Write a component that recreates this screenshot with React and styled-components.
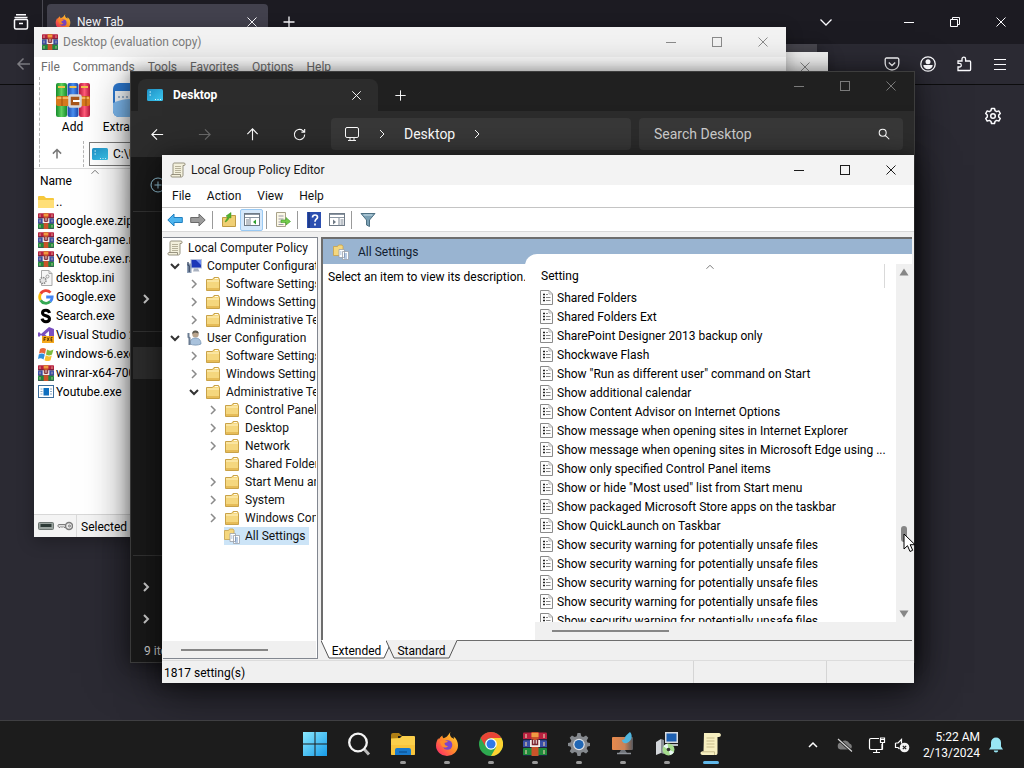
import React from "react";
import styled, { createGlobalStyle, css } from "styled-components";

const GlobalStyle = createGlobalStyle`
  *, *::before, *::after { box-sizing: border-box; }
  html, body, #root { height: 100%; }
  body {
    margin: 0;
    overflow: hidden;
    background: #2b2a33;
    font-family: Roboto, "Open Sans", sans-serif;
    font-size: 12px;
    line-height: 16px;
  }
  button, input { font: inherit; color: inherit; }
  button { border: 0; padding: 0; background: none; white-space: nowrap; cursor: default; }
  svg { display: block; flex: none; }
`;

/* ---------- line glyphs ---------- */

const glyphs = {
  close: <path d="M3.5 3.5l9 9M12.500 3.500l-9 9" />,
  min: <path d="M3 8.500h10" />,
  max: <rect x="3.500" y="3.500" width="9" height="9" />,
  restore: <path d="M3.500 5.500h7v7h-7zM5.500 5.500v-2h7v7h-2" />,
  plus: <path d="M8 2.500v11M2.500 8h11" />,
  right: <path d="M6 4l4 4-4 4" />,
  down: <path d="M4 6l4 4 4-4" />,
  up: <path d="M4 10l4-4 4 4" />,
  wideDown: <path d="M2.500 5.500L8 11l5.500-5.500" />,
  arrowLeft: <path d="M14 8H2.500M7.500 2.500L2 8l5.500 5.500" />,
  arrowRight: <path d="M2 8h11.500M8.500 2.500L14 8l-5.500 5.500" />,
  arrowUp: <path d="M8 14V2.500M2.500 7.500L8 2l5.500 5.500" />,
  refresh: <path d="M13.500 8A5.500 5.500 0 1 1 11.500 3.800M13.500 2v3.500h-3.500M13.300 5.200L11.500 3.800" />,
  menu: <path d="M2 3.500h12M2 8.500h12M2 13.500h12" />,
  search: <path d="M6.500 2.500a4 4 0 1 1 0 8 4 4 0 0 1 0-8zM9.500 9.500l4.500 4.500" />,
  circlePlus: <path d="M8 1a7 7 0 1 1 0 14A7 7 0 0 1 8 1zM8 4.500v7M4.500 8h7" />,
  monitor: <path d="M3 1.500h10a1.500 1.500 0 0 1 1.500 1.500v7a1.500 1.500 0 0 1-1.500 1.500H3A1.500 1.500 0 0 1 1.500 10V3A1.500 1.500 0 0 1 3 1.500zM6 11.500v2.500M10 11.500v2.500M4 14.500h8" />,
  archive: <path d="M3 .8h10M1.500 3.500h13M2.500 5.500h11a1 1 0 0 1 1 1v7a1.500 1.500 0 0 1-1.500 1.500H3A1.500 1.500 0 0 1 1.500 13.500v-7a1 1 0 0 1 1-1zM6 9.500h4" />,
  pocket: <path d="M2.500 2h11a1.300 1.300 0 0 1 1.300 1.300V7.500a6.800 6.500 0 0 1-13.600 0V3.300A1.300 1.300 0 0 1 2.500 2zM4.800 6.500L8 9.500l3.200-3" />,
  puzzle: <path d="M2 14.500V11h1.500a1.800 1.800 0 0 0 0-3.600H2V5h4V3a1.800 1.800 0 0 1 3.600 0v2h4a1 1 0 0 1 1 1v7.500a1 1 0 0 1-1 1z" />,
};

function Glyph({ name, size = 16, weight = 1, color = "currentColor" }) {
  return (
    <svg width={size} height={size} viewBox="0 0 16 16" fill="none" stroke={color} strokeWidth={weight} aria-hidden="true">
      {glyphs[name]}
    </svg>
  );
}

const AccountIcon = () => (
  <svg width="16" height="16" viewBox="0 0 16 16">
    <circle cx="8" cy="8" r="7.200" fill="none" stroke="#fbfbfe" strokeWidth="1.300" />
    <circle cx="8" cy="5.700" r="2.500" fill="#fbfbfe" />
    <path d="M3.300 9h9.400c0 2.600-2 4.200-4.700 4.200S3.300 11.600 3.300 9z" fill="#fbfbfe" />
  </svg>
);

const gearTeeth = "M10.500 1h3l.8 3.200 2 .9 2.700-1.700 2.300 2.300-1.600 2.800.8 2 2.500.600v2.800l-2.500.6-.8 2 1.600 2.800-2.300 2.300-2.700-1.700-2 .9-.8 3.200h-3l-.8-3.200-2-.9L5 21.600l-2.300-2.300 1.600-2.800-.8-2L1 13.900v-2.800l2.500-.6.8-2-1.600-2.800L5 3.400l2.700 1.700 2-.9z";

const GearOutline = () => (
  <svg width="18" height="18" viewBox="0 0 18 18" fill="none" stroke="#fbfbfe" strokeWidth="1.500" strokeLinejoin="round">
    <path d="M7.500 1.500h3l.6 2.200 1.500.9 2.200-.7 1.500 2.600L14.700 8v2l1.600 1.500-1.500 2.600-2.200-.7-1.500.9-.6 2.200h-3l-.6-2.200-1.500-.9-2.200.7-1.500-2.600L3.300 10V8L1.700 6.500l1.500-2.600 2.200.7 1.500-.9z" />
    <circle cx="9" cy="9" r="2.300" />
  </svg>
);

/* ---------- coloured icons ---------- */

const FirefoxIcon = ({ size = 24 }) => (
  <svg width={size} height={size} viewBox="0 0 24 24">
    <defs>
      <linearGradient id="foxBody" x1="1" y1="0" x2="0" y2="1">
        <stop offset="0" stopColor="#ffd93b" />
        <stop offset=".45" stopColor="#ff9427" />
        <stop offset=".8" stopColor="#ff4557" />
        <stop offset="1" stopColor="#e82870" />
      </linearGradient>
    </defs>
    <path d="M15.500 0c-1 2-.5 4 1 5.500 1.500.5 2 1 2.500 1.500 0-1-.3-2-.5-2.500 3 2 4.500 5.500 4.500 9a11 10.500 0 0 1-22 0C1 10 2.500 7.500 3.500 6c0 .5 0 1 .2 1.500C4.500 6 6 4.500 7.500 3.500c-.2 1 .2 2 1 2.700C12 5.500 13 3 15.500 0z" fill="url(#foxBody)" />
    <circle cx="12.500" cy="13" r="4.800" fill="#7c45c9" />
    <path d="M5 9c3-1.500 6-.5 8 .5-1 1.200-3 1-3.500 1.800 0 1.700 1.500 3 3.500 2.700-2 3-7.500 2-8-5z" fill="#ff8a2a" />
  </svg>
);

const ChromeIcon = () => (
  <svg width="24" height="24" viewBox="0 0 24 24">
    <circle cx="12" cy="12" r="12" fill="#2da94f" />
    <path d="M12 6h10.400A12 12 0 0 1 12 24l5.200-9z" fill="#fdd231" />
    <path d="M1.600 6A12 12 0 0 1 22.400 6H12a6 6 0 0 0-5.200 9z" fill="#e94436" />
    <circle cx="12" cy="12" r="5.800" fill="#fff" />
    <circle cx="12" cy="12" r="4.500" fill="#3079e8" />
  </svg>
);

const StartIcon = () => (
  <svg width="24" height="24" viewBox="0 0 24 24">
    <defs>
      <linearGradient id="start" gradientUnits="userSpaceOnUse" x1="0" y1="0" x2="24" y2="24">
        <stop offset="0" stopColor="#8ae9ff" />
        <stop offset="1" stopColor="#179be8" />
      </linearGradient>
    </defs>
    <path d="M0 0h11.500v11.500H0zM12.500 0H24v11.500H12.500zM0 12.500h11.500V24H0zM12.500 12.500H24V24H12.500z" fill="url(#start)" />
  </svg>
);

const TaskSearchIcon = () => (
  <svg width="24" height="24" viewBox="0 0 24 24" fill="none">
    <path d="M17 17l5 5.500" stroke="#bbb" strokeWidth="3" />
    <circle cx="11" cy="10.500" r="8.800" stroke="#f4f4f4" strokeWidth="2.300" />
  </svg>
);

const ExplorerIcon = () => (
  <svg width="26" height="24" viewBox="0 0 26 24">
    <path d="M1 3a2 2 0 0 1 2-2h6l3 3h-4v4H1z" fill="#b07f14" />
    <path d="M1 6.500l9-.5 2-2h12a1 1 0 0 1 1 1v17a1 1 0 0 1-1 1H2a1 1 0 0 1-1-1z" fill="#fbcf4b" />
    <path d="M1 13h24v9a1 1 0 0 1-1 1H2a1 1 0 0 1-1-1z" fill="#f7bd30" opacity=".6" />
    <path d="M5 23v-5a2 2 0 0 1 2-2h12a2 2 0 0 1 2 2v5z" fill="#1879cc" />
    <path d="M9 20h8" stroke="#0c579c" strokeWidth="1.500" />
  </svg>
);

const BooksIcon = ({ size = 16 }) => (
  <svg width={size} height={size} viewBox="0 0 24 24">
    <rect width="24" height="7.500" y=".5" rx="1" fill="#b8203f" />
    <rect width="24" height="7.500" y="8.300" rx="1" fill="#3a4fa8" />
    <rect width="24" height="7.500" y="16" rx="1" fill="#1f8a3c" />
    <path d="M0 7.500h24M0 15.500h24M0 23.500h24" stroke="#1d2340" />
    <path d="M3 2v4M3 10v4M3 18v4M21 2v4M21 10v4M21 18v4" stroke="#dfc7a8" strokeWidth="1.200" />
    <path d="M8.500 0h7v24h-7z" fill="#c9542a" />
    <path d="M8.500 1h7v4h-7z" fill="#ef9b43" />
    <path d="M7 8h10v7H7z" fill="#f4ece8" />
    <path d="M9.500 7v5.500h5V7M12 8v5" fill="none" stroke="#7b2430" strokeWidth="1.500" />
  </svg>
);

const AddIcon = () => (
  <svg width="34" height="34" viewBox="0 0 34 34">
    <defs>
      <linearGradient id="bookG"><stop offset="0" stopColor="#168b2c" /><stop offset=".5" stopColor="#5fd05f" /><stop offset="1" stopColor="#168b2c" /></linearGradient>
      <linearGradient id="bookB"><stop offset="0" stopColor="#1a46a8" /><stop offset=".5" stopColor="#4a90f0" /><stop offset="1" stopColor="#1a46a8" /></linearGradient>
      <linearGradient id="bookR"><stop offset="0" stopColor="#b3173a" /><stop offset=".5" stopColor="#ff5a78" /><stop offset="1" stopColor="#b3173a" /></linearGradient>
    </defs>
    <rect x="0" y="0" width="11" height="34" rx="2" fill="url(#bookG)" />
    <rect x="11.500" y="0" width="11" height="34" rx="2" fill="url(#bookB)" />
    <rect x="23" y="0" width="11" height="34" rx="2" fill="url(#bookR)" />
    <path d="M2 4h7M13.500 4h7M25 4h7" stroke="#f2c14b" strokeWidth="2" />
    <rect x="0" y="13" width="34" height="10" rx="2" fill="#d7791d" />
    <path d="M1 15h32" stroke="#f6b35b" strokeWidth="2" />
    <path d="M6 13v10M30 13v10" stroke="#9d510e" />
    <rect x="13.500" y="12.500" width="11" height="11" rx="1" fill="#a8561a" stroke="#d9d9d9" strokeWidth="2.500" />
    <path d="M17 18h7" stroke="#fff" strokeWidth="2" />
  </svg>
);

const ExtractIcon = () => (
  <svg width="34" height="34" viewBox="0 0 34 34">
    <rect x="0" y="0" width="34" height="34" rx="6" fill="#2d78cf" />
    <path d="M2 8h30v12H2z" fill="#f4f8fc" />
    <path d="M5 14h24" stroke="#9fb7d2" strokeWidth="2" strokeDasharray="2 2" />
    <path d="M0 20q17-8 34 0v8a6 6 0 0 1-6 6H6a6 6 0 0 1-6-6z" fill="#7fbcf3" />
  </svg>
);

const DesktopIcon = () => (
  <svg width="16" height="16" viewBox="0 0 16 16">
    <defs>
      <linearGradient id="desk" x1="0" y1="0" x2="1" y2="1">
        <stop offset="0" stopColor="#1f8fc4" /><stop offset="1" stopColor="#3cc8f0" />
      </linearGradient>
    </defs>
    <rect x="0" y="2" width="16" height="12" rx="1.500" fill="url(#desk)" />
    <path d="M2.500 5h1.500M2.500 8h1.500M8 12.500h1M10.500 12.500h1M13 12.500h1" stroke="#d8f6ff" strokeWidth="1.200" />
  </svg>
);

const FolderIcon = () => (
  <svg width="16" height="16" viewBox="0 0 16 16">
    <path d="M1.500 3.500h6l1.500-2h4.500l1 2v11h-13z" fill="#f5d77e" stroke="#c9a248" />
    <path d="M2 5h12" stroke="#fff3c4" />
    <path d="M10 2.500h3" stroke="#fffbe8" />
    <path d="M2 12h12v2H2z" fill="#e6bc58" />
  </svg>
);

const UpFolderIcon = () => (
  <svg width="16" height="16" viewBox="0 0 16 16">
    <path d="M0 3a1 1 0 0 1 1-1h5l2 2h7a1 1 0 0 1 1 1v8a1 1 0 0 1-1 1H1a1 1 0 0 1-1-1z" fill="#f6c83c" />
    <path d="M0 6h16v7a1 1 0 0 1-1 1H1a1 1 0 0 1-1-1z" fill="#ffdf78" />
  </svg>
);

const ScrollIcon = ({ size = 16 }) => (
  <svg width={size} height={size} viewBox="0 0 16 16">
    <path d="M4 1h10c1.500 0 1.500 2.500 0 2.500h-1V13c0 1-.5 2-1.500 2H2c-1.500 0-1.500-2.500 0-2.500h1V3c0-1 .3-2 1-2z" fill="#f3f0dc" stroke="#8d8875" strokeWidth=".9" />
    <path d="M5 4.500h6M5 6.500h6M5 8.500h6M5 10.500h6" stroke="#a49f86" strokeWidth=".8" />
    <path d="M2 12.500h8.500v2.300" fill="none" stroke="#8d8875" strokeWidth=".9" />
  </svg>
);

const TaskScrollIcon = () => (
  <svg width="24" height="24" viewBox="0 0 24 24">
    <path d="M5 1h15c2.500 0 2.500 4 0 4h-1.500v16c0 1.500-.8 2-1.800 2H3.500C1 23 1 19.500 3 19.500h1.500z" fill="#f7efc0" />
    <path d="M7.500 6h8M7.500 9h8M7.500 12h8M7.500 15h8" stroke="#c9bd8c" />
    <path d="M3 19.800h12.500V23" fill="none" stroke="#c9bd8c" />
  </svg>
);

const ComputerIcon = () => (
  <svg width="16" height="16" viewBox="0 0 16 16">
    <rect x="4.500" y="1" width="11.500" height="9.500" fill="#b9c4dc" />
    <rect x="5.500" y="2" width="9.500" height="7.500" fill="#1c37b8" />
    <path d="M10 2h5v5z" fill="#6f8df0" />
    <path d="M8 10.500h4l1.500 3H7z" fill="#a9b1c0" />
    <path d="M1 5.500h4.500V15H1z" fill="#8fa0b8" />
    <path d="M2 4v3l1.200 1v6" stroke="#3c4b66" fill="none" strokeWidth="1.300" />
  </svg>
);

const UserIcon = () => (
  <svg width="16" height="16" viewBox="0 0 16 16">
    <circle cx="9.500" cy="4.200" r="3.200" fill="#b9a48c" />
    <path d="M6.300 4a3.200 3.200 0 0 1 6.400-.5L9 2.500z" fill="#5d5a50" />
    <path d="M4 14c0-4 2-6 5.500-6s5.500 2 5.500 6c-3 1.500-8 1.500-11 0z" fill="#a9c2dc" stroke="#6f8caa" strokeWidth=".7" />
    <path d="M2.500 3v4l1 1v7" stroke="#6b7c92" fill="none" strokeWidth="2" />
  </svg>
);

const AllSettingsIcon = () => (
  <svg width="16" height="16" viewBox="0 0 16 16">
    <path d="M.5 2.500h4l1-1.500H9l1 1.500v9H.5z" fill="#f5d77e" stroke="#c9a248" strokeWidth=".8" />
    <path d="M6 5.500h5.500v8H6zM9.500 7.500h6v8h-6z" fill="#fff" stroke="#9aa0a8" strokeWidth=".8" />
    <path d="M11 10h3M11 12h3M11 14h3M7.300 8h1M7.300 10h1" stroke="#4a78b8" strokeWidth=".8" />
  </svg>
);

const PolicyIcon = () => (
  <svg width="13" height="15" viewBox="0 0 13 15">
    <path d="M.5.500h8.500l3.500 3.500V14.500H.5z" fill="#fdfdfd" stroke="#8a8a8a" />
    <path d="M9 .500V4h3.500" fill="none" stroke="#b5b5b5" />
    <path d="M3 4.500h2M3 7.500h2M3 10.500h2" stroke="#222" strokeWidth="1.400" />
    <path d="M6 4.500h2M6 7.500h4.500M6 10.500h4.500" stroke="#888" />
  </svg>
);

const IniIcon = () => (
  <svg width="16" height="16" viewBox="0 0 16 16">
    <path d="M3.500.500h7.500l3 3v12H3.500z" fill="#f6f6f6" stroke="#a9a9a9" />
    <path d="M11 .5v3h3" fill="none" stroke="#a9a9a9" />
    <circle cx="5" cy="10.500" r="3" fill="#e4e4e4" stroke="#8b8b8b" strokeDasharray="1.500 .8" strokeWidth="1.500" />
    <circle cx="9.500" cy="6.500" r="1.500" fill="none" stroke="#9b9b9b" />
  </svg>
);

const GoogleIcon = () => (
  <svg width="16" height="16" viewBox="0 0 16 16" fill="none" strokeWidth="2.800">
    <path d="M2.600 4.800A6.200 6.200 0 0 1 12.500 3.600" stroke="#ea4335" />
    <path d="M2.600 11.200a6.200 6.200 0 0 1 0-6.400" stroke="#fbbc05" />
    <path d="M12.200 12.600a6.200 6.200 0 0 1-9.600-1.400" stroke="#34a853" />
    <path d="M8.200 8h6a6.200 6.200 0 0 1-2 4.600" stroke="#4285f4" />
  </svg>
);

const SearchExeIcon = () => (
  <svg width="16" height="16" viewBox="0 0 16 16" fill="none">
    <path d="M11.500 5C11 3 9.800 2.300 8 2.300 6 2.300 4.500 3.300 4.500 5c0 3.600 7 2 7 5.800 0 1.900-1.500 2.900-3.500 2.900s-3.500-1-4-3" stroke="#000" strokeWidth="3" />
  </svg>
);

const VisualStudioIcon = () => (
  <svg width="16" height="16" viewBox="0 0 16 16">
    <path d="M11 0l5 2v11l-5 2-8-7-2 2-1-1V6l1-1 2 2z" fill="#7a4fc0" />
    <path d="M11 4v7L7 7.500z" fill="#fff" />
    <rect x="4" y="9" width="12" height="7" fill="#f6a81c" />
    <path d="M6 14v-3.500h2M6 12.300h1.500M9.200 10.500l2 3.500M11.200 10.500l-2 3.500M14.500 10.500H13V14h1.500M13 12.300h1.300" stroke="#4a2a00" fill="none" strokeWidth=".8" />
  </svg>
);

const Win7Icon = () => (
  <svg width="16" height="16" viewBox="0 0 16 16">
    <path d="M2 3c2-1.500 4-1.500 6 0L7 8C5 6.500 3 6.500 1 7.500z" fill="#e8663c" />
    <path d="M9 3.500c2 1.500 4 1.500 6.500 0L14 8.500c-2 1.200-4 1.200-6 0z" fill="#7cbb3c" />
    <path d="M.8 8.500c2-1.200 4-1.200 6 0l-1.300 5C3.500 12 1.500 12 0 13z" fill="#2f8fdc" />
    <path d="M7.800 9.300c2 1.400 4 1.400 6 .2l-1.300 4.700c-2 1.200-4 1.200-6 0z" fill="#fbc22f" />
  </svg>
);

const ExeIcon = () => (
  <svg width="16" height="14" viewBox="0 0 16 14">
    <rect x=".5" y=".5" width="15" height="12" fill="#fff" stroke="#3f6f9c" />
    <rect x="5.500" y="3" width="5.500" height="7.500" fill="#0f6fc0" />
    <path d="M2.500 4h2M2.500 6.500h2M2.500 9h2M12 4h2M12 6.500h2M12 9h2" stroke="#8aa8c4" />
  </svg>
);

const TaskSettingsIcon = () => (
  <svg width="24" height="24" viewBox="0 0 24 24">
    <path d={gearTeeth} fill="#85898e" />
    <circle cx="12" cy="12.500" r="5.800" fill="#dfe3e8" />
    <circle cx="12" cy="12.500" r="4.600" fill="#1f66b4" />
  </svg>
);

const PersonalizeIcon = () => (
  <svg width="24" height="24" viewBox="0 0 24 24">
    <defs>
      <linearGradient id="pers"><stop offset="0" stopColor="#e98a4c" /><stop offset=".6" stopColor="#c98258" /><stop offset="1" stopColor="#55585e" /></linearGradient>
    </defs>
    <rect x="1" y="5" width="21" height="13" rx="1" fill="url(#pers)" />
    <path d="M10 18h4l2 3H8z" fill="#6f7379" />
    <path d="M6 21.500h14" stroke="#8f9399" strokeWidth="1.500" />
    <path d="M19 0c3 3 2 9-3 11-3 1-5-1-5-3 2 0 3-1 3-3 1-2 3-3 5-5z" fill="#4fb6df" />
  </svg>
);

const InstallerIcon = () => (
  <svg width="24" height="24" viewBox="0 0 24 24">
    <path d="M1 10l5-3v14l-5 2z" fill="#d3d6da" />
    <path d="M6 7l3 1v14l-3-1z" fill="#8b9097" />
    <rect x="10" y="0" width="13" height="11" fill="#d8dbe0" />
    <rect x="11.500" y="1.500" width="10" height="8" fill="#1d5fb0" />
    <path d="M14 12h9v2h-9z" fill="#b9bdc3" />
    <circle cx="13.500" cy="17.500" r="6" fill="#a6dc8e" />
    <path d="M13.500 17.500l-5-3a6 6 0 0 1 4-3zM13.500 17.500l5.500 2.500a6 6 0 0 1-4 3z" fill="#e9f7f4" />
    <circle cx="13.500" cy="17.500" r="1.800" fill="#333" />
  </svg>
);

const CloudOffIcon = () => (
  <svg width="18" height="16" viewBox="0 0 18 16">
    <path d="M4.500 12.500a3.500 3.500 0 0 1 .3-6.900 5 5 0 0 1 8.700.9 3.200 3.200 0 0 1 .5 6z" fill="#7b7b7b" />
    <path d="M2 2l14 12.500" stroke="#1c1c1c" strokeWidth="3" />
    <path d="M2 2l14 12.500" stroke="#d8d8d8" strokeWidth="1.200" />
  </svg>
);

const NetworkIcon = () => (
  <svg width="18" height="18" viewBox="0 0 18 18" fill="none" stroke="#fff" strokeWidth="1.200">
    <path d="M11 2.500H3A1.500 1.500 0 0 0 1.500 4v8A1.500 1.500 0 0 0 3 13.500h11V8M8.500 13.500v3M5 16.500h7" />
    <path d="M12.500 2v4.500h4V2zM14.500 6.500v7M13 3.500h3" />
  </svg>
);

const MutedIcon = () => (
  <svg width="16" height="16" viewBox="0 0 16 16">
    <path d="M1.500 6v4.500H4l1.500 1.500M1.500 6H4l3.500-3.500v4" fill="none" stroke="#fff" strokeWidth="1.200" />
    <circle cx="10.500" cy="10.500" r="4.800" fill="#f4f4f4" />
    <path d="M8.800 8.800l3.400 3.400M12.200 8.800l-3.400 3.400" stroke="#222" strokeWidth="1.200" />
  </svg>
);

const BellIcon = () => (
  <svg width="16" height="16" viewBox="0 0 16 16" fill="#99e6f4">
    <path d="M8 .5a5 5 0 0 1 5 5v4l2 3H1l2-3v-4a5 5 0 0 1 5-5zM5.800 13.500h4.400a2.200 2 0 0 1-4.400 0z" />
  </svg>
);

/* toolbar pictures of the policy editor */
const BackIcon = () => (
  <svg width="16" height="16" viewBox="0 0 16 16"><path d="M.8 8L7 2v3.500h8.300v5H7V14z" fill="#4db4ee" stroke="#1f7fc0" /></svg>
);
const ForwardIcon = () => (
  <svg width="16" height="16" viewBox="0 0 16 16"><path d="M15.200 8L9 2v3.500H.7v5H9V14z" fill="#9c9c9c" stroke="#6a6a6a" /></svg>
);
const FolderUpIcon = () => (
  <svg width="16" height="16" viewBox="0 0 16 16">
    <path d="M1.500 5.500h7l2-2h4v11h-13z" fill="#f0cf74" stroke="#bf9a45" />
    <path d="M4 10c1-2 2-4 3-5L5 4l5-3.500V6L8.500 5.500C7 8 6 9.500 4 10z" fill="#52b52c" stroke="#3c8f1c" strokeWidth=".5" />
  </svg>
);
const TreePaneIcon = ({ flip }) => (
  <svg width="16" height="16" viewBox="0 0 16 16">
    <rect x=".5" y="1.500" width="15" height="12" fill="#fff" stroke="#6f7a86" />
    <path d="M1 2.500h14M1 5.500h14" stroke="#8b96a3" />
    <path d={flip ? "M10 6v7.500M11.500 8h3M11.500 10h3M11.500 12h3" : "M6 6v7.500M2 8h3M2 10h3M2 12h3"} stroke="#7a8592" />
    <path d={flip ? "M4 7.500v5L7 10z" : "M12 7.500v5L9 10z"} fill={flip ? "#6f7a86" : "#2ea02e"} />
  </svg>
);
const ExportIcon = () => (
  <svg width="16" height="16" viewBox="0 0 16 16">
    <path d="M1.500.500h9v14h-9z" fill="#fbf8e6" stroke="#a8a28a" />
    <path d="M3.500 4h5M3.500 7h5M3.500 10h3M3.500 12.500h5" stroke="#9c98a8" />
    <path d="M6 8h5V5.500L15.500 9.500 11 13v-2.500H6z" fill="#74cc4c" stroke="#3d9a24" strokeWidth=".6" />
  </svg>
);
const HelpIcon = () => (
  <svg width="14" height="16" viewBox="0 0 14 16">
    <rect width="14" height="16" fill="#2c4fb0" />
    <path d="M2 0v16" stroke="#1b357f" strokeWidth="1.500" />
    <path d="M5.500 5.500C5.500 3.500 7 3 8 3s2.500.7 2.500 2.300C10.500 7 8 7 8 9.800M8 11.500v2" stroke="#fff" fill="none" strokeWidth="1.700" />
  </svg>
);
const FilterIcon = () => (
  <svg width="16" height="16" viewBox="0 0 16 16">
    <path d="M1 1.500h14L9.500 8v6.500L6.500 13V8z" fill="#7ba0b4" stroke="#4f7183" />
    <path d="M3.500 3h9" stroke="#cfe2ec" />
  </svg>
);
const DiskIcon = () => (
  <svg width="16" height="10" viewBox="0 0 16 10">
    <rect x=".5" y="1.500" width="15" height="7" rx="1" fill="#9aa39f" stroke="#6d7572" />
    <path d="M2.500 4.500h11" stroke="#2d3a36" strokeWidth="3" />
  </svg>
);
const KeyIcon = () => (
  <svg width="16" height="10" viewBox="0 0 16 10" fill="none" stroke="#7c7c7c">
    <path d="M9 3.500H1.500L.8 5l1.200 1.500h1l1-1 1 1 1-1 1 1h2" fill="#ddd" />
    <circle cx="12" cy="5" r="3.500" fill="#e8e8e8" strokeWidth="1.500" />
    <circle cx="12.500" cy="5" r="1" />
  </svg>
);
const CursorIcon = () => (
  <svg width="14" height="20" viewBox="0 0 14 20">
    <path d="M1 1v15l3.500-3.300L7 18.500l2.700-1.200-2.500-5.600H12z" fill="#fff" stroke="#000" />
  </svg>
);

/* ---------- desktop and browser ---------- */

const Desktop = styled.div`
  position: relative;
  display: flex;
  flex-direction: column;
  min-height: 100vh;
  overflow: hidden;
`;

const Browser = styled.main`
  flex: 1;
  display: flex;
  flex-direction: column;
  background: #2b2a33;
  color: #fbfbfe;
`;

const TabStrip = styled.header`
  display: flex;
  align-items: center;
  height: 44px;
  background: #1c1b22;
`;

const StripButton = styled.button`
  display: grid;
  place-items: center;
  width: ${(p) => p.$w || 42}px;
  height: 44px;
`;

const BrowserTab = styled.div`
  display: flex;
  align-items: center;
  gap: 6px;
  width: 221px;
  height: 36px;
  margin-left: 4px;
  padding: 0 8px;
  border-radius: 4px;
  background: #42414d;
  span { flex: 1; }
`;

const Rule = styled.div`
  width: 1px;
  height: 44px;
  background: #4a4952;
`;

const Spacer = styled.div` flex: 1; `;

const NavBar = styled.div`
  display: flex;
  align-items: center;
  justify-content: space-between;
  height: 41px;
  padding: 0 6px;
  border-bottom: 1px solid #0c0c0d;
`;

const NavGroup = styled.div` display: flex; `;

const NavButton = styled.button`
  display: grid;
  place-items: center;
  width: 36px;
  height: 36px;
  opacity: ${(p) => (p.$dim ? 0.4 : 1)};
`;

const PageArea = styled.section`
  display: flex;
  justify-content: flex-end;
  align-items: flex-start;
  padding: 13px;
`;

/* ---------- shared window parts ---------- */

const Win = styled.section`
  position: absolute;
  left: ${(p) => p.$x}px;
  top: ${(p) => p.$y}px;
  width: ${(p) => p.$w}px;
  height: ${(p) => p.$h}px;
  display: flex;
  flex-direction: column;
  overflow: hidden;
  background: ${(p) => p.$bg};
  box-shadow: ${(p) => (p.$deep ? "0 0 14px rgba(0,0,0,.3), 0 10px 40px rgba(0,0,0,.55)" : "0 4px 16px rgba(0,0,0,.3)")};
`;

const TitleBar = styled.header`
  display: flex;
  align-items: center;
  height: 30px;
  flex: none;
  padding-left: 8px;
  gap: 5px;
  background: #f3f3f3;
  color: ${(p) => p.$color || "#1b1b1b"};
  h2 { flex: 1; margin: 0; font-size: 12px; font-weight: 400; }
`;

const Caption = styled.div`
  display: flex;
  color: ${(p) => p.$color || "inherit"};
`;

const CaptionButton = styled.button`
  display: grid;
  place-items: center;
  width: 46px;
  height: 28px;
`;

function CaptionButtons({ color }) {
  return (
    <Caption $color={color}>
      <CaptionButton aria-label="Minimize"><Glyph name="min" /></CaptionButton>
      <CaptionButton aria-label="Maximize"><Glyph name="max" /></CaptionButton>
      <CaptionButton aria-label="Close"><Glyph name="close" /></CaptionButton>
    </Caption>
  );
}

const MenuBar = styled.nav`
  display: flex;
  align-items: center;
  flex: none;
  gap: ${(p) => p.$gap}px;
  height: ${(p) => p.$h}px;
  padding-left: ${(p) => p.$pad}px;
  background: #fff;
  color: ${(p) => p.$color};
`;

/* ---------- archiver ---------- */

const RarTools = styled.div`
  display: flex;
  gap: 4px;
  height: 64px;
  margin-left: 5px;
  padding: 6px 6px 0;
  border-left: 1px dashed #b5b5b5;
`;

const RarTool = styled.button`
  display: flex;
  flex-direction: column;
  align-items: center;
  gap: 2px;
  width: 53px;
`;

const RarAddress = styled.div`
  display: flex;
  flex: none;
  align-items: center;
  height: 26px;
  margin-left: 5px;
  border-left: 1px dashed #b5b5b5;
`;

const RarUp = styled.button`
  display: grid;
  place-items: center;
  width: 33px;
  height: 26px;
  color: #777;
`;

const RarPath = styled.div`
  display: flex;
  flex: 1;
  align-items: center;
  height: 24px;
  padding-left: 2px;
  gap: 5px;
  border: 1px solid #7a7a7a;
  background: #fff;
  input { width: 100px; border: 0; padding: 0; outline: 0; background: none; }
`;

const RarPathSlot = styled.div`
  display: flex;
  flex: 1;
  height: 26px;
  margin-left: 10px;
  padding: 1px 0 1px 5px;
  border-left: 1px dashed #b5b5b5;
`;

const RarTable = styled.table`
  border-collapse: collapse;
  width: 100%;
  margin-top: 1px;
  border-top: 1px solid #dcdcdc;
  th { position: relative; height: 24px; padding: 0 6px; text-align: left; font-weight: 400; }
  td { height: 19px; padding: 0 4px; }
`;

const SortMark = styled.span`
  position: absolute;
  top: ${(p) => p.$top}px;
  left: ${(p) => p.$left}px;
  color: #666;
`;

const Item = styled.div`
  display: flex;
  align-items: center;
  gap: ${(p) => p.$gap || 2}px;
  height: 19px;
  white-space: nowrap;
`;

const RarStatus = styled.footer`
  display: flex;
  align-items: center;
  gap: 3px;
  height: 23px;
  margin-top: auto;
  padding-left: 4px;
  border-top: 1px solid #d8d8d8;
  background: #f4f4f4;
  span { height: 22px; padding: 4px 0 0 4px; border-left: 1px solid #dadada; }
`;

const rarFiles = [
  ["..", UpFolderIcon], ["google.exe.zip", BooksIcon], ["search-game.rar", BooksIcon], ["Youtube.exe.rar", BooksIcon],
  ["desktop.ini", IniIcon], ["Google.exe", GoogleIcon], ["Search.exe", SearchExeIcon], ["Visual Studio 2022", VisualStudioIcon],
  ["windows-6.exe", Win7Icon], ["winrar-x64-700.exe", BooksIcon], ["Youtube.exe", ExeIcon],
];

function Archiver() {
  return (
    <Win $x={34} $y={27} $w={752} $h={510} $bg="#fff">
      <TitleBar $color="#7c7c7c">
        <BooksIcon />
        <h2>Desktop (evaluation copy)</h2>
        <CaptionButtons color="#8b8b8b" />
      </TitleBar>
      <MenuBar $h={20} $pad={7} $gap={13} $color="#6d6d6d">
        {["File", "Commands", "Tools", "Favorites", "Options", "Help"].map((m) => <button key={m}>{m}</button>)}
      </MenuBar>
      <RarTools>
        <RarTool><AddIcon />Add</RarTool>
        <RarTool><ExtractIcon />Extract To</RarTool>
      </RarTools>
      <RarAddress>
        <RarUp aria-label="Up one level"><Glyph name="arrowUp" size={12} weight={2} /></RarUp>
        <RarPathSlot>
          <RarPath><DesktopIcon /><input aria-label="Path" defaultValue="C:\Users" /></RarPath>
        </RarPathSlot>
      </RarAddress>
      <RarTable>
        <thead><tr><th>Name<SortMark $top={-4} $left={54}><Glyph name="up" size={14} /></SortMark></th></tr></thead>
        <tbody>
          {rarFiles.map(([name, Icon]) => (
            <tr key={name}><td><Item><Icon />{name}</Item></td></tr>
          ))}
        </tbody>
      </RarTable>
      <RarStatus><DiskIcon /><KeyIcon /><span>Selected 2 files</span></RarStatus>
    </Win>
  );
}

/* ---------- file explorer ---------- */

const ExplorerWin = styled(Win)`
  border: 1px solid #3d3d3d;
  color: #fff;
`;

const ExplorerTabs = styled.div`
  display: flex;
  flex: none;
  height: 39px;
  padding-left: 7px;
  background: #202020;
`;

const ExplorerTab = styled.div`
  display: flex;
  align-items: center;
  gap: 10px;
  align-self: flex-end;
  width: 240px;
  height: 32px;
  padding: 0 14px 0 9px;
  border-radius: 8px 8px 0 0;
  background: #2c2c2c;
  strong { flex: 1; font-weight: 700; }
`;

const ExplorerNewTab = styled.button`
  display: grid;
  place-items: center;
  align-self: flex-end;
  width: 44px;
  height: 32px;
`;

const ExplorerNav = styled.div`
  display: flex;
  flex: none;
  align-items: center;
  height: 46px;
  padding: 0 11px 0 3px;
  gap: 8px;
  background: #2c2c2c;
`;

const ExplorerNavButtons = styled.div`
  display: flex;
  width: 189px;
  button { display: grid; place-items: center; flex: 1; height: 32px; }
  button:disabled { color: #6a6a6a; }
`;

const Crumbs = styled.div`
  display: flex;
  flex: 1;
  align-items: center;
  gap: 14px;
  height: 32px;
  padding-left: 13px;
  border-radius: 4px;
  background: #383838;
  font-size: 14px;
`;

const ExplorerSearch = styled.label`
  display: flex;
  align-items: center;
  width: 264px;
  height: 32px;
  padding: 0 12px 0 15px;
  border-radius: 4px;
  background: #383838;
  font-size: 14px;
  input { flex: 1; min-width: 0; border: 0; outline: 0; padding: 0; background: none; }
  input::placeholder { color: #cfcfcf; opacity: 1; }
`;

const ExplorerSide = styled.aside`
  display: flex;
  flex: 1;
  flex-direction: column;
  padding: 0 0 0 2px;
  background: #191919;
  color: #d0d0d0;
`;

const SideCommands = styled.div`
  height: 55px;
  padding: 20px 0 0 17px;
  border-bottom: 1px solid #333;
`;

const SideRow = styled.div`
  display: flex;
  align-items: center;
  height: 32px;
  padding-left: 5px;
  background: ${(p) => (p.$active ? "#2d2d2d" : "none")};
`;

const SideGroup = styled.div`
  padding-top: ${(p) => p.$top}px;
  padding-bottom: ${(p) => p.$bottom || 0}px;
  border-bottom: ${(p) => (p.$line ? "1px solid #333" : "0")};
`;

const ExplorerStatus = styled.footer`
  padding: 0 0 3px 11px;
  margin-top: auto;
`;

function Explorer() {
  return (
    <ExplorerWin $x={130} $y={71} $w={785} $h={592} $bg="#191919" $deep>
      <ExplorerTabs>
        <ExplorerTab>
          <DesktopIcon />
          <strong>Desktop</strong>
          <button aria-label="Close tab"><Glyph name="close" size={15} /></button>
        </ExplorerTab>
        <ExplorerNewTab aria-label="New tab"><Glyph name="plus" size={15} /></ExplorerNewTab>
        <Spacer />
        <CaptionButtons color="#7a7a7a" />
      </ExplorerTabs>
      <ExplorerNav>
        <ExplorerNavButtons>
          <button aria-label="Back"><Glyph name="arrowLeft" size={15} weight={1.2} /></button>
          <button aria-label="Forward" disabled><Glyph name="arrowRight" size={15} weight={1.2} /></button>
          <button aria-label="Up"><Glyph name="arrowUp" size={15} weight={1.2} /></button>
          <button aria-label="Refresh"><Glyph name="refresh" size={15} weight={1.2} /></button>
        </ExplorerNavButtons>
        <Crumbs>
          <Glyph name="monitor" />
          <Glyph name="right" />
          <button>Desktop</button>
          <Glyph name="right" />
        </Crumbs>
        <ExplorerSearch>
          <input placeholder="Search Desktop" aria-label="Search Desktop" />
          <Glyph name="search" size={14} weight={1.2} />
        </ExplorerSearch>
      </ExplorerNav>
      <ExplorerSide>
        <SideCommands><Glyph name="circlePlus" color="#9ccfe4" /></SideCommands>
        <SideGroup $top={71} $bottom={16} $line>
          <SideRow><Glyph name="right" weight={2} /></SideRow>
        </SideGroup>
        <SideGroup $top={15} $bottom={176} $line>
          <SideRow $active />
        </SideGroup>
        <SideGroup $top={15}>
          <SideRow><Glyph name="right" weight={2} /></SideRow>
          <SideRow><Glyph name="right" weight={2} /></SideRow>
        </SideGroup>
        <ExplorerStatus>9 items</ExplorerStatus>
      </ExplorerSide>
    </ExplorerWin>
  );
}

/* ---------- policy editor ---------- */

const PolicyTools = styled.div`
  display: flex;
  flex: none;
  align-items: center;
  height: 25px;
  padding-left: 1px;
  border-top: 1px solid #c4c4c4;
  border-bottom: 1px solid #d9d9d9;
  background: #fff;
`;

const ToolButton = styled.button`
  display: grid;
  place-items: center;
  width: 23px;
  height: 22px;
  ${(p) => p.$active && css`
    border: 1px solid #99c9f3;
    border-radius: 2px;
    background: #d5e8fb;
  `}
`;

const ToolRule = styled.div`
  width: 1px;
  height: 18px;
  margin: 0 4px 0 3px;
  background: #9a9a9a;
`;

const Panes = styled.div`
  display: flex;
  flex: 1;
  gap: 3px;
  min-height: 0;
  margin-top: 5px;
  padding: 0 2px 0 1px;
`;

const TreePane = styled.div`
  display: flex;
  flex-direction: column;
  width: 155px;
  flex: none;
  overflow: hidden;
  margin-bottom: 1px;
  border: 1px solid #828790;
  border-left: 0;
  background: #fff;
  padding: 1px 1px 0 0;
`;

const TreeRow = styled.button`
  display: flex;
  flex: none;
  align-items: center;
  height: 18px;
  overflow: hidden;
  padding-left: ${(p) => 4 + 19 * Math.max(0, p.$level - 1)}px;
  color: #111;
`;

const Twist = styled.span`
  flex: none;
  width: 19px;
  height: 16px;
  color: ${(p) => (p.$open ? "#333" : "#8a8a8a")};
`;

const TreeLabel = styled.span`
  display: flex;
  flex: none;
  align-items: center;
  gap: 5px;
  height: 18px;
  padding-right: 4px;
  background: ${(p) => (p.$selected ? "#cce4f7" : "none")};
`;

const TreeScroll = styled.div`
  display: flex;
  align-items: center;
  height: 17px;
  margin-top: auto;
  padding-left: ${(p) => p.$pad}px;
  background: #f0f0f0;
  &::after { content: ""; width: ${(p) => p.$w}px; height: 2px; background: #868686; }
`;

const RightSide = styled.div`
  display: flex;
  flex: 1;
  flex-direction: column;
  min-width: 0;
`;

const DetailPane = styled.div`
  display: flex;
  flex: 1;
  flex-direction: column;
  min-height: 0;
  border: 1px solid #6d6d6d;
  border-width: 2px 0 0 2px;
  background: #fff;
`;

const DetailHead = styled.div`
  display: flex;
  flex: none;
  align-items: center;
  gap: 9px;
  height: 25px;
  padding-left: 10px;
  background: #99b4d1;
  color: #12202f;
`;

const DetailBody = styled.div`
  display: flex;
  flex: 1;
  min-height: 0;
  p { width: 202px; flex: none; margin: 0; padding: 5px 0 0 5px; white-space: nowrap; }
`;

const ListBox = styled.div`
  display: flex;
  flex: 1;
  flex-direction: column;
  min-width: 0;
  margin-top: -10px;
  padding-top: 10px;
  border-top-left-radius: 12px;
  background: #fff;
`;

const ListView = styled.div`
  display: flex;
  flex: 1;
  min-height: 0;
  padding-left: 10px;
`;

const ListClip = styled.div`
  flex: 1;
  overflow: hidden;
`;

const SettingsTable = styled.table`
  table-layout: fixed;
  border-collapse: separate;
  border-spacing: 0;
  width: 350px;
  th {
    position: relative;
    height: 24px;
    padding: 0 6px;
    border-right: 1px solid #d9d9d9;
    text-align: left;
    font-weight: 400;
  }
  td { height: 19px; padding: 0 0 0 5px; }
`;

const ListScroll = styled.div`
  display: flex;
  flex-direction: column;
  align-items: center;
  justify-content: space-between;
  width: 16px;
  padding: 4px 0 4px;
  background: #f0f0f0;
`;

const ScrollThumb = styled.div`
  width: 6px;
  height: 16px;
  margin-top: 182px;
  border-radius: 3px;
  background: #868686;
`;

const ListFoot = styled(TreeScroll)`
  flex: none;
  height: 18px;
  margin-left: 10px;
`;

const ViewTabs = styled.div`
  display: flex;
  flex: none;
  height: 20px;
  border-top: 1px solid #6d6d6d;
`;

const ViewTab = styled.button`
  position: relative;
  width: 71px;
  height: 19px;
  margin-right: -6px;
  svg { position: absolute; left: 0; top: -1px; }
  span { position: relative; }
`;

function TabShape({ w, fill }) {
  return (
    <svg width={w} height="19" viewBox={`0 0 ${w} 19`}>
      <path d={`M0 0L8 18H${w - 8}L${w} 0z`} fill={fill} />
      <path d={`M0 0.500L8 18H${w - 8}L${w} 0.500`} fill="none" stroke="#555" />
    </svg>
  );
}

const StatusBar = styled.footer`
  display: flex;
  flex: none;
  height: 23px;
  border-top: 1px solid #dcdcdc;
  span { flex: 1; padding: 4px 0 0 2px; }
  i { width: 133px; border-left: 1px solid #d5d5d5; }
  i:last-child { width: 88px; }
`;

const tree = [
  [0, "Local Computer Policy", ScrollIcon, null],
  [1, "Computer Configuration", ComputerIcon, true],
  [2, "Software Settings", FolderIcon, false],
  [2, "Windows Settings", FolderIcon, false],
  [2, "Administrative Templates", FolderIcon, false],
  [1, "User Configuration", UserIcon, true],
  [2, "Software Settings", FolderIcon, false],
  [2, "Windows Settings", FolderIcon, false],
  [2, "Administrative Templates", FolderIcon, true],
  [3, "Control Panel", FolderIcon, false],
  [3, "Desktop", FolderIcon, false],
  [3, "Network", FolderIcon, false],
  [3, "Shared Folders", FolderIcon, null],
  [3, "Start Menu and Taskbar", FolderIcon, false],
  [3, "System", FolderIcon, false],
  [3, "Windows Components", FolderIcon, false],
  [3, "All Settings", AllSettingsIcon, null],
];

const unsafe = "Show security warning for potentially unsafe files";
const settings = [
  "Shared Folders", "Shared Folders Ext", "SharePoint Designer 2013 backup only", "Shockwave Flash",
  "Show \"Run as different user\" command on Start", "Show additional calendar", "Show Content Advisor on Internet Options",
  "Show message when opening sites in Internet Explorer", "Show message when opening sites in Microsoft Edge using ...",
  "Show only specified Control Panel items", "Show or hide \"Most used\" list from Start menu",
  "Show packaged Microsoft Store apps on the taskbar", "Show QuickLaunch on Taskbar",
  unsafe, unsafe, unsafe, unsafe, unsafe,
];

function PolicyEditor() {
  return (
    <Win $x={162} $y={155} $w={752} $h={528} $bg="#f0f0f0" $deep>
      <TitleBar>
        <ScrollIcon />
        <h2>Local Group Policy Editor</h2>
        <CaptionButtons />
      </TitleBar>
      <MenuBar $h={22} $pad={10} $gap={16} $color="#111">
        {["File", "Action", "View", "Help"].map((m) => <button key={m}>{m}</button>)}
      </MenuBar>
      <PolicyTools>
        <ToolButton aria-label="Back"><BackIcon /></ToolButton>
        <ToolButton aria-label="Forward"><ForwardIcon /></ToolButton>
        <ToolRule />
        <ToolButton aria-label="Up one level"><FolderUpIcon /></ToolButton>
        <ToolButton aria-label="Show tree" $active><TreePaneIcon /></ToolButton>
        <ToolRule />
        <ToolButton aria-label="Export list"><ExportIcon /></ToolButton>
        <ToolRule />
        <ToolButton aria-label="Help"><HelpIcon /></ToolButton>
        <ToolButton aria-label="Show action pane"><TreePaneIcon flip /></ToolButton>
        <ToolRule />
        <ToolButton aria-label="Filter"><FilterIcon /></ToolButton>
      </PolicyTools>
      <Panes>
        <TreePane>
          {tree.map(([level, name, Icon, open], i) => (
            <TreeRow key={i} $level={level}>
              {level > 0 && (
                <Twist $open={open}>
                  {open !== null && <Glyph name={open ? "down" : "right"} weight={open ? 2 : 1.5} />}
                </Twist>
              )}
              <TreeLabel $selected={name === "All Settings"}><Icon />{name}</TreeLabel>
            </TreeRow>
          ))}
          <TreeScroll $pad={18} $w={87} />
        </TreePane>
        <RightSide>
          <DetailPane>
            <DetailHead><AllSettingsIcon />All Settings</DetailHead>
            <DetailBody>
              <p>Select an item to view its description.</p>
              <ListBox>
                <ListView>
                  <ListClip>
                    <SettingsTable>
                      <thead>
                        <tr><th>Setting<SortMark $top={-4} $left={168}><Glyph name="up" size={14} /></SortMark></th></tr>
                      </thead>
                      <tbody>
                        {settings.map((name, i) => (
                          <tr key={i}><td><Item $gap={4}><PolicyIcon />{name}</Item></td></tr>
                        ))}
                      </tbody>
                    </SettingsTable>
                  </ListClip>
                  <ListScroll>
                    <svg width="10" height="8" viewBox="0 0 10 8"><path d="M5 .5L9.500 7.500H.5z" fill="#868686" /></svg>
                    <ScrollThumb />
                    <svg width="10" height="8" viewBox="0 0 10 8"><path d="M5 7.500L.5.500h9z" fill="#868686" /></svg>
                  </ListScroll>
                </ListView>
                <ListFoot $pad={17} $w={117} />
              </ListBox>
            </DetailBody>
          </DetailPane>
          <ViewTabs>
            <ViewTab><TabShape w={71} fill="#fff" /><span>Extended</span></ViewTab>
            <ViewTab><TabShape w={71} fill="#f0f0f0" /><span>Standard</span></ViewTab>
          </ViewTabs>
        </RightSide>
      </Panes>
      <StatusBar><span>1817 setting(s)</span><i /><i /></StatusBar>
    </Win>
  );
}

/* ---------- taskbar ---------- */

const Taskbar = styled.footer`
  position: relative;
  display: grid;
  grid-template-columns: 1fr auto 1fr;
  flex: none;
  height: 48px;
  border-top: 1px solid #3f3f42;
  background: #1c1c1c;
  color: #fff;
`;

const TaskApps = styled.div`
  display: flex;
  grid-column: 2;
  padding-left: 2px;
`;

const TaskButton = styled.button`
  position: relative;
  display: grid;
  place-items: center;
  width: 44px;
  height: 46px;
  &::after {
    content: "";
    position: absolute;
    bottom: 3px;
    left: calc(50% - ${(p) => (p.$active ? 8 : 3)}px);
    width: ${(p) => (p.$active ? 16 : 6)}px;
    height: 3px;
    border-radius: 2px;
    background: ${(p) => (p.$active ? "#60b8ea" : p.$running ? "#9a9a9a" : "transparent")};
  }
`;

const Tray = styled.div`
  display: flex;
  align-items: center;
  justify-content: flex-end;
  gap: 8px;
  padding-right: 20px;
  time { text-align: right; }
`;

const TrayGroup = styled.button`
  display: flex;
  align-items: center;
  gap: ${(p) => p.$gap}px;
  margin-right: ${(p) => p.$after}px;
`;

const Pointer = styled.div`
  position: absolute;
  left: 903px;
  top: 533px;
  pointer-events: none;
`;

const apps = [
  ["Start", StartIcon, ""], ["Search", TaskSearchIcon, ""], ["File Explorer", ExplorerIcon, "run"], ["Firefox", FirefoxIcon, "run"],
  ["Chrome", ChromeIcon, "run"], ["WinRAR", () => <BooksIcon size={24} />, "run"], ["Settings", TaskSettingsIcon, "run"],
  ["Personalization", PersonalizeIcon, "run"], ["Installer", InstallerIcon, "run"], ["Policy Editor", TaskScrollIcon, "active"],
];

export default function App() {
  return (
    <Desktop>
      <GlobalStyle />
      <Browser>
        <TabStrip>
          <StripButton aria-label="Firefox View"><Glyph name="archive" weight={1.5} /></StripButton>
          <Rule />
          <BrowserTab>
            <FirefoxIcon size={16} />
            <span>New Tab</span>
            <button aria-label="Close tab"><Glyph name="close" /></button>
          </BrowserTab>
          <StripButton aria-label="New tab"><Glyph name="plus" weight={1.300} /></StripButton>
          <Spacer />
          <StripButton $w={120} aria-label="List tabs"><Glyph name="wideDown" weight={1.300} /></StripButton>
          <StripButton $w={46} aria-label="Minimize"><Glyph name="min" /></StripButton>
          <StripButton $w={46} aria-label="Restore"><Glyph name="restore" /></StripButton>
          <StripButton $w={46} aria-label="Close"><Glyph name="close" /></StripButton>
        </TabStrip>
        <NavBar>
          <NavButton aria-label="Back" $dim><Glyph name="arrowLeft" weight={1.500} /></NavButton>
          <NavGroup>
            <NavButton aria-label="Pocket"><Glyph name="pocket" weight={1.300} /></NavButton>
            <NavButton aria-label="Account"><AccountIcon /></NavButton>
            <NavButton aria-label="Extensions"><Glyph name="puzzle" weight={1.300} /></NavButton>
            <NavButton aria-label="Menu"><Glyph name="menu" weight={1} /></NavButton>
          </NavGroup>
        </NavBar>
        <PageArea>
          <NavButton aria-label="Personalize new tab"><GearOutline /></NavButton>
        </PageArea>
      </Browser>

      <Win $x={300} $y={44} $w={517} $h={300} $bg="#48474f" />
      <Win $x={300} $y={52} $w={528} $h={400} $bg="#f3f3f3">
        <TitleBar><Spacer /><CaptionButtons color="#8b8b8b" /></TitleBar>
      </Win>
      <Archiver />
      <Explorer />
      <PolicyEditor />

      <Taskbar>
        <TaskApps>
          {apps.map(([name, Icon, state]) => (
            <TaskButton key={name} aria-label={name} $running={state === "run"} $active={state === "active"}><Icon /></TaskButton>
          ))}
        </TaskApps>
        <Tray>
          <TrayGroup aria-label="Show hidden icons" $after={7}><Glyph name="up" weight={1.500} /></TrayGroup>
          <TrayGroup aria-label="OneDrive" $after={6}><CloudOffIcon /></TrayGroup>
          <TrayGroup aria-label="Network and sound" $gap={8} $after={5}><NetworkIcon /><MutedIcon /></TrayGroup>
          <time dateTime="2024-02-13T05:22">5:22 AM<br />2/13/2024</time>
          <BellIcon />
        </Tray>
      </Taskbar>
      <Pointer><CursorIcon /></Pointer>
    </Desktop>
  );
}
